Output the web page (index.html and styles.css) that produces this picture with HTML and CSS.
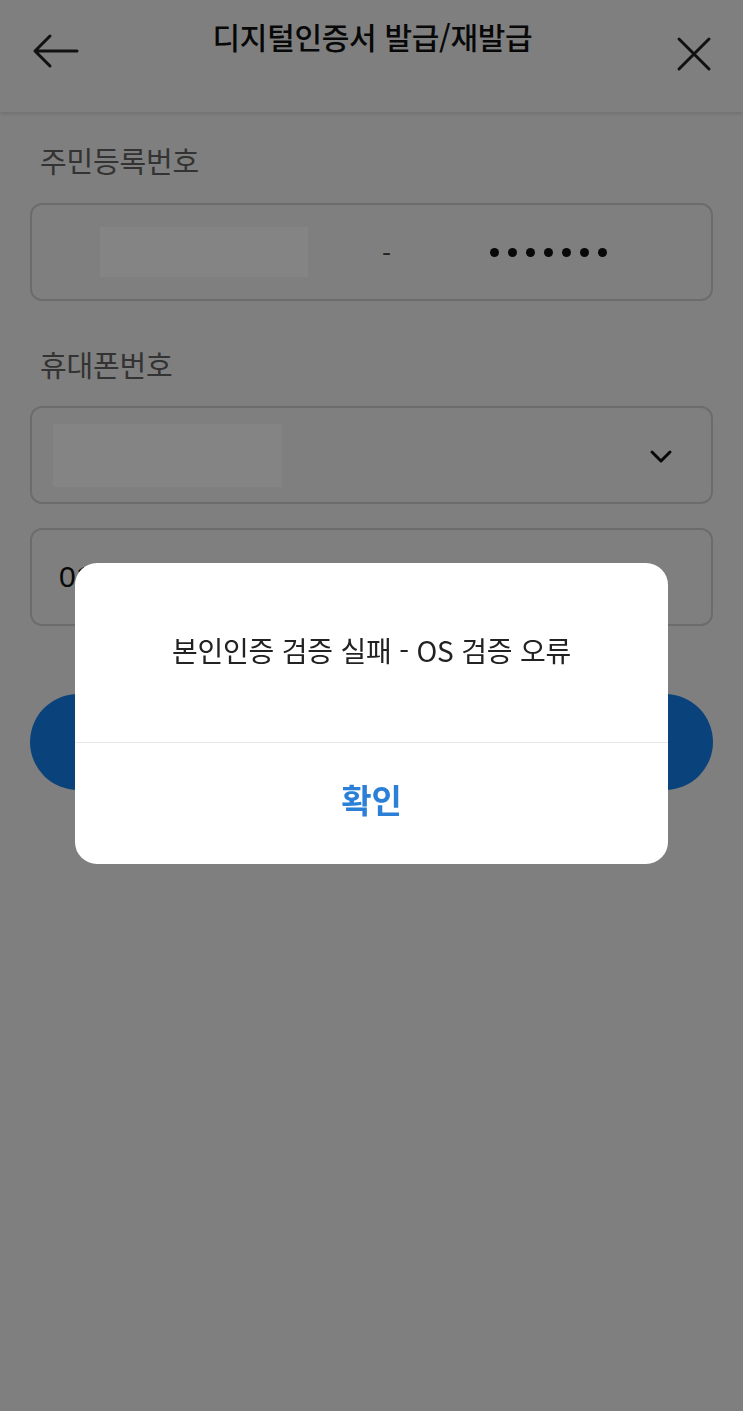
FILE: index.html
```html
<!DOCTYPE html>
<html lang="ko">
<head>
    <meta charset="UTF-8">
    <meta name="viewport" content="width=device-width, initial-scale=1.0">
    <title>디지털인증서 발급/재발급</title>
    <link rel="stylesheet" href="styles.css">
</head>
<body>
    <header class="topbar">
        <svg class="icon-back" width="48" height="36" viewBox="0 0 48 36">
            <path d="M46 18 H4 M19 3 L4 18 L19 33" fill="none" stroke="#222" stroke-width="3" stroke-linecap="round" stroke-linejoin="round"/>
        </svg>
        <h1 class="title">디지털인증서 발급/재발급</h1>
        <svg class="icon-close" width="36" height="36" viewBox="0 0 36 36">
            <path d="M3 3 L33 33 M33 3 L3 33" fill="none" stroke="#222" stroke-width="3" stroke-linecap="round"/>
        </svg>
    </header>

    <main class="form">
        <label class="field-label">주민등록번호</label>
        <div class="box box-rrn">
            <span class="redact redact-rrn"></span>
            <span class="dash">-</span>
            <span class="dots">
                <i></i><i></i><i></i><i></i><i></i><i></i><i></i>
            </span>
        </div>

        <label class="field-label label-phone">휴대폰번호</label>
        <div class="box box-carrier">
            <span class="redact redact-carrier"></span>
            <svg class="chevron" width="24" height="16" viewBox="0 0 24 16">
                <path d="M3 3 L12 12 L21 3" fill="none" stroke="#111" stroke-width="3" stroke-linecap="round" stroke-linejoin="round"/>
            </svg>
        </div>

        <div class="box box-phone">
            <span class="phone-text">010</span>
        </div>

        <button class="submit" type="button">확인</button>
    </main>

    <div class="dim"></div>

    <div class="dialog">
        <div class="dialog-msg">본인인증 검증 실패 - OS 검증 오류</div>
        <div class="dialog-btn">확인</div>
    </div>
</body>
</html>
```

FILE: styles.css
```css
body {
    margin: 0;
    font-family: "Noto Sans CJK KR", "Noto Sans", sans-serif;
    background-color: #fff;
    color: #222;
    height: 1411px;
    overflow: hidden;
}

.topbar {
    height: 112px;
    display: flex;
    align-items: flex-start;
    justify-content: space-between;
    padding: 0 31px 0 31px;
    box-sizing: border-box;
    background-color: #fff;
    box-shadow: 0 2px 4px rgba(0, 0, 0, 0.12);
}

.icon-back {
    margin-top: 33px;
}

.icon-close {
    margin-top: 36px;
}

.title {
    margin: 14px 10px 0 0;
    font-size: 30px;
    font-weight: 500;
    letter-spacing: -0.3px;
    color: #111;
}

.form {
    display: flex;
    flex-direction: column;
    padding: 28px 30px 0 30px;
}

.field-label {
    display: block;
    height: 40px;
    line-height: 40px;
    margin: 0 0 23px 10px;
    font-size: 29px;
    color: #666;
    letter-spacing: -0.2px;
}

.label-phone {
    margin-top: 43px;
    margin-bottom: 22px;
}

.box {
    height: 98px;
    box-sizing: border-box;
    border: 2px solid #d8d8d8;
    border-radius: 12px;
    display: flex;
    align-items: center;
}

.box-rrn {
    padding-left: 68px;
}

.redact {
    position: relative;
    z-index: 11;
    background-color: #848484;
}

.redact-rrn {
    width: 208px;
    height: 50px;
}

.dash {
    margin-left: 74px;
    font-size: 26px;
    color: #444;
}

.dots {
    display: flex;
    gap: 9px;
    margin-left: 99px;
}

.dots i {
    width: 9px;
    height: 9px;
    border-radius: 50%;
    background-color: #111;
}

.box-carrier {
    padding: 4px 38px 0 21px;
    justify-content: space-between;
}

.redact-carrier {
    width: 229px;
    height: 63px;
    margin-top: -4px;
}

.box-phone {
    margin-top: 24px;
    padding-left: 27px;
}

.phone-text {
    font-family: "Liberation Sans", sans-serif;
    font-size: 30px;
    color: #111;
}

.submit {
    margin-top: 68px;
    height: 96px;
    border: none;
    border-radius: 48px;
    background-color: #1484f8;
    color: #fff;
    font-size: 28px;
    font-family: inherit;
}

.dim {
    position: fixed;
    inset: 0;
    z-index: 10;
    background-color: rgba(0, 0, 0, 0.5);
}

.dialog {
    position: absolute;
    top: 563px;
    left: 75px;
    z-index: 20;
    width: 593px;
    height: 301px;
    background-color: #fff;
    border-radius: 22px;
    display: flex;
    flex-direction: column;
    overflow: hidden;
}

.dialog-msg {
    height: 180px;
    display: flex;
    align-items: center;
    justify-content: center;
    padding-bottom: 6px;
    box-sizing: border-box;
    font-size: 28px;
    letter-spacing: -0.2px;
    color: #222;
    border-bottom: 1px solid #e8e8e8;
}

.dialog-btn {
    flex: 1;
    display: flex;
    align-items: center;
    justify-content: center;
    padding-bottom: 10px;
    font-size: 33px;
    font-weight: 700;
    color: #2b7fd6;
}
```
